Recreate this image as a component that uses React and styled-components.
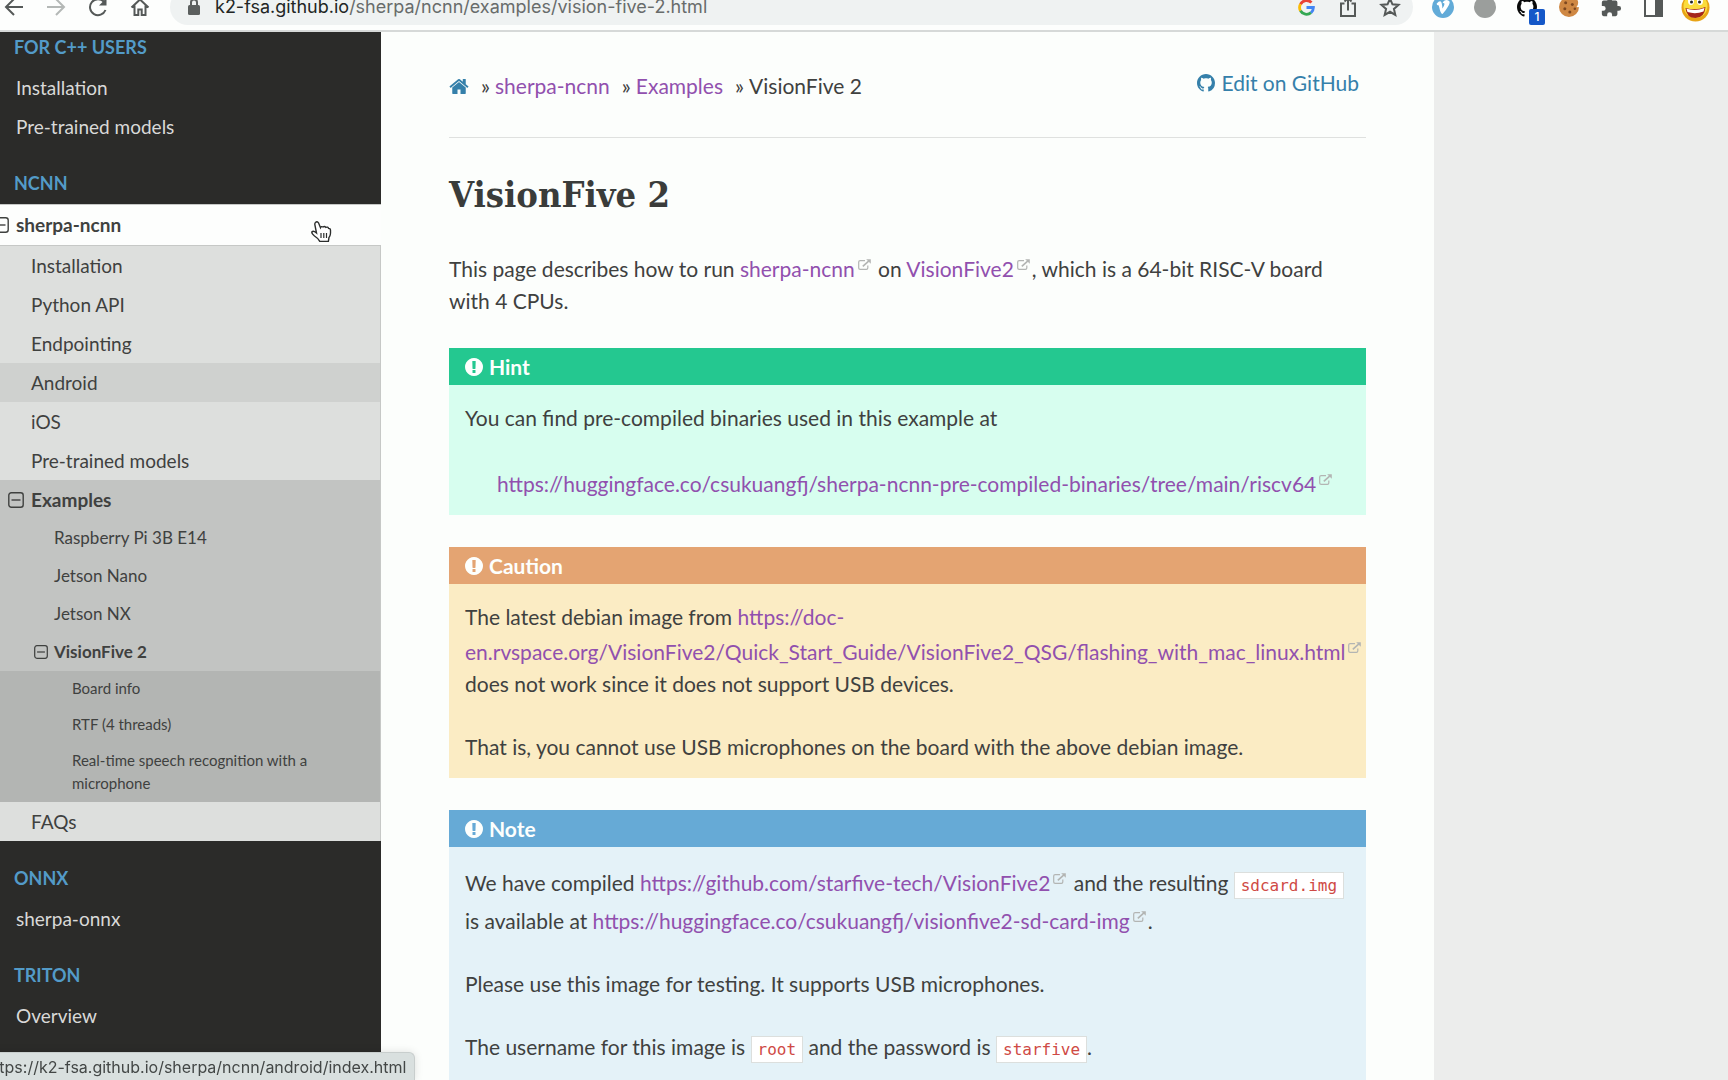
import React from "react";
import styled, { createGlobalStyle } from "styled-components";

const GlobalStyle = createGlobalStyle`
  *, *::before, *::after { box-sizing: border-box; }
  html, body { margin: 0; padding: 0; }
  body { background: #ecedec; color: #3f413f; font: 400 21px/32px Lato, "Open Sans", sans-serif; overflow: hidden; }
  ul, p, h1 { margin: 0; padding: 0; }
  ul { list-style: none; }
  a { text-decoration: none; color: inherit; }
  button { border: 0; padding: 0; background: none; color: inherit; font: inherit; cursor: pointer; }
  svg { display: block; flex: none; }
`;

/* ---------- browser chrome ---------- */

const Window = styled.div`
  display: flex;
  flex-direction: column;
  height: 100vh;
  overflow: hidden;
`;

const ToolbarClip = styled.header`
  flex: none;
  display: flex;
  align-items: flex-end;
  height: 32px;
  overflow: hidden;
  background: #fdfefd;
  border-bottom: 2px solid #d6d9d8;
`;

const Toolbar = styled.div`
  flex: 1;
  display: flex;
  align-items: center;
  gap: 9px;
  height: 46px;
  margin-left: -7px;
  padding-right: 12px;
  color: #5b5f5e;
`;

const ToolGroup = styled.div`
  display: flex;
  align-items: center;
`;

const ToolButton = styled.button`
  position: relative;
  display: flex;
  align-items: center;
  justify-content: center;
  width: 42px;
  height: 36px;
  color: ${(p) => p.$color || "#555958"};
`;

const AddressBar = styled.div`
  flex: 1;
  display: flex;
  align-items: center;
  height: 36px;
  padding: 0 2px 0 17px;
  border-radius: 18px;
  background: #eff2f2;
`;

const Url = styled.a`
  flex: 1;
  margin-left: 14px;
  font: 400 18px/24px Inter, Roboto, sans-serif;
  color: #686c6b;
  strong { font-weight: 400; color: #222524; }
`;

const Badge = styled.span`
  position: absolute;
  right: 3px;
  bottom: 0;
  width: 16px;
  height: 16px;
  border-radius: 2px;
  background: #1558c8;
  color: #fff;
  font: 500 12px/16px Inter, sans-serif;
  text-align: center;
`;

const StatusBubble = styled.div`
  position: fixed;
  left: -18px;
  bottom: 0;
  height: 28px;
  padding: 0 8px 0 2px;
  border: 1px solid #c8cecd;
  border-bottom: 0;
  border-top-right-radius: 6px;
  background: #d9e0df;
  color: #434746;
  font: 400 16px/28px Inter, Roboto, sans-serif;
  white-space: nowrap;
  box-shadow: 0 0 8px rgba(0, 0, 0, 0.12);
`;

const Pointer = styled.svg`
  position: fixed;
  left: 310px;
  top: 220px;
`;

/* ---------- page ---------- */

const Page = styled.div`
  flex: 1;
  display: flex;
  min-height: 0;
`;

const Sidebar = styled.nav`
  flex: none;
  width: 381px;
  overflow: hidden;
  background: #2b2b29;
`;

const MenuScroll = styled.div`
  margin-top: -22px;
`;

const Caption = styled.p`
  margin-top: 16px;
  padding-left: 14px;
  font-size: 18px;
  line-height: 42px;
  font-weight: 700;
  text-transform: uppercase;
  color: #539bc8;
`;

const levels = {
  1: { left: 16, size: 19, pad: "8px 16px 7px", line: 24 },
  2: { left: 31, size: 19, pad: "8px 16px 7px", line: 24 },
  3: { left: 54, size: 17, pad: "7px 16px", line: 24 },
  4: { left: 72, size: 15, pad: "6px 48px 7px", line: 23 },
};

const Row = styled.li`
  display: flex;
  align-items: center;
  padding: ${(p) => levels[p.$level].pad};
  padding-left: ${(p) => levels[p.$level].left}px;
  font-size: ${(p) => levels[p.$level].size}px;
  line-height: ${(p) => levels[p.$level].line}px;
  font-weight: ${(p) => (p.$current ? 700 : 400)};
  color: ${(p) => (p.$dark ? "#d9d9d8" : "#3f413f")};
  background: ${(p) => (p.$hover ? "#cfd1cf" : "transparent")};
`;

const SectionRow = styled(Row)`
  padding-bottom: 8px;
  border: 1px solid #c6c8c6;
  border-width: 1px 0;
  background: #fdfefd;
`;

const Toggle = styled.button`
  display: flex;
  align-items: center;
  justify-content: flex-end;
  width: 24px;
  height: 24px;
  margin-left: -24px;
  padding-right: ${(p) => (p.$small ? 6 : 7)}px;
`;

const Level2 = styled.ul`
  background: #dddfdd;
  border-right: 1px solid #c6c8c6;
`;

const Current = styled.div`
  background: #c2c4c2;
`;

const Level4 = styled.ul`
  background: #b3b5b3;
`;

const Content = styled.main`
  flex: 0 1 1053px;
  padding: 35px 68px;
  overflow: hidden;
  background: #fcfefc;
`;

const Crumbs = styled.div`
  display: flex;
  justify-content: space-between;
  margin-bottom: 32px;
  padding-bottom: 35px;
  border-bottom: 1px solid #dfe1df;
`;

const CrumbList = styled.ul`
  display: flex;
  padding-top: 3px;
`;

const Crumb = styled.li`
  display: flex;
  align-items: center;
  & + &::before { content: "»"; margin: 0 5px 0 12px; }
`;

const Link = styled.a`
  color: ${(p) => (p.$fresh ? "#3580aa" : "#9150ae")};
`;

const EditLink = styled(Link)`
  display: flex;
  align-items: center;
  gap: 6px;
  height: 32px;
  padding-right: 7px;
`;

const Title = styled.h1`
  margin-bottom: 32px;
  font: 700 36px/48px "Roboto Slab", "DejaVu Serif Condensed", "DejaVu Serif", serif;
  color: #3a3c3a;
`;

const Intro = styled.p`
  margin-bottom: 31px;
`;

const tones = {
  hint: ["#24c890", "#d7feef"],
  caution: ["#e4a472", "#fbecc4"],
  note: ["#66aad6", "#e4f2f8"],
};

const BoxTitle = styled.p`
  display: flex;
  align-items: center;
  gap: 6px;
  height: 37px;
  padding: 0 16px;
  font-weight: 700;
  color: #fdfffd;
  background: ${(p) => tones[p.$tone][0]};
`;

const BoxBody = styled.div`
  padding: 17px ${(p) => (p.$flush ? 0 : 16)}px 15px 16px;
  p + p { margin-top: 31px; }
`;

const Box = styled.section`
  margin-bottom: 32px;
  background: ${(p) => tones[p.$tone][1]};
  &:last-child { padding-bottom: 16px; }
`;

const Quote = styled.p`
  padding-left: 32px;
`;

const Code = styled.code`
  padding: 3px 6px;
  border: 1px solid #dcdfdd;
  background: #fff;
  color: #cf4a45;
  font-family: "DejaVu Sans Mono", monospace;
  font-size: 16px;
`;

const ExternalMark = styled.span`
  display: inline-flex;
  align-items: flex-end;
  width: 18px;
  height: 20px;
  padding-left: 3px;
  vertical-align: 7px;
  color: #b3b5b3;
`;

/* ---------- icons ---------- */

const Svg = ({ size = 20, h, box = "0 0 24 24", children, ...rest }) => (
  <svg width={size} height={h || size} viewBox={box} fill="none" stroke="currentColor" strokeWidth="2" aria-hidden="true" {...rest}>
    {children}
  </svg>
);

const Octocat = ({ size }) => (
  <Svg size={size} box="0 0 16 16" stroke="none">
    <path fill="currentColor" d="M8 0C3.58 0 0 3.58 0 8c0 3.54 2.29 6.53 5.47 7.59.4.07.55-.17.55-.38 0-.19-.01-.82-.01-1.49-2.01.37-2.53-.49-2.69-.94-.09-.23-.48-.94-.82-1.13-.28-.15-.68-.52-.01-.53.63-.01 1.08.58 1.23.82.72 1.21 1.87.87 2.33.66.07-.52.28-.87.51-1.07-1.78-.2-3.64-.89-3.64-3.95 0-.87.31-1.59.82-2.15-.08-.2-.36-1.02.08-2.12 0 0 .67-.21 2.2.82.64-.18 1.32-.27 2-.27.68 0 1.36.09 2 .27 1.53-1.04 2.2-.82 2.2-.82.44 1.1.16 1.92.08 2.12.51.56.82 1.27.82 2.15 0 3.07-1.87 3.75-3.65 3.95.29.25.54.73.54 1.48 0 1.07-.01 1.93-.01 2.2 0 .21.15.46.55.38A8.013 8.013 0 0016 8c0-4.42-3.58-8-8-8z" />
  </Svg>
);

const HomeIcon = () => (
  <Svg size={20} h={21} box="0 0 1664 1792" stroke="none">
    <path fill="currentColor" d="M1408 992v480q0 26-19 45t-45 19h-384v-384h-256v384h-384q-26 0-45-19t-19-45v-480q0-1 .5-3t.5-3l575-474 575 474q1 2 1 6zm223-69l-62 74q-8 9-21 11h-3q-13 0-21-7l-692-577-692 577q-12 8-24 7-13-2-21-11l-62-74q-8-10-7-23.5t11-21.5l719-599q32-26 76-26t76 26l244 204v-195q0-14 9-23t23-9h192q14 0 23 9t9 23v408l219 182q10 8 11 21.5t-7 23.5z" />
  </Svg>
);

const AlertIcon = () => (
  <Svg size={18} box="128 128 1536 1536" stroke="none">
    <path fill="currentColor" d="M896 128q209 0 385.5 103t279.5 279.5 103 385.5-103 385.5-279.5 279.5-385.5 103-385.5-103-279.5-279.5-103-385.5 103-385.5 279.5-279.5 385.5-103zm128 1247v-190q0-14-9-23.5t-22-9.5h-192q-13 0-23 10t-10 23v190q0 13 10 23t23 10h192q13 0 22-9.5t9-23.5zm-2-344l18-621q0-12-10-18-10-8-24-8h-220q-14 0-24 8-10 6-10 18l17 621q0 10 10 17.5t24 7.5h185q14 0 23.5-7.5t10.5-17.5z" />
  </Svg>
);

const MinusBox = ({ size }) => (
  <Svg size={size} box="0 0 16 16" strokeWidth="1.4">
    <rect x="0.8" y="0.8" width="14.4" height="14.4" rx="2.5" />
    <path d="M3.5 8h9" />
  </Svg>
);

const External = () => (
  <ExternalMark>
    <Svg size={13} h={11} box="0 0 13 11" strokeWidth="1.2">
      <path d="M7 1.6H2.2Q.7 1.6.7 3v5.9q0 1.4 1.5 1.4h6.2q1.4 0 1.4-1.4V6.6" />
      <path d="M4.8 7.4L11.2 1.6" strokeWidth="1.6" />
      <path d="M8.2.2h4.6v4.6z" fill="currentColor" stroke="none" />
    </Svg>
  </ExternalMark>
);

const Ext = ({ href, children }) => (
  <Link href={href}>{children}<External /></Link>
);

/* ---------- composition ---------- */

const BrowserBar = () => (
  <ToolbarClip>
    <Toolbar>
      <ToolGroup>
        <ToolButton aria-label="Back">
          <Svg size={20} box="0 0 20 20"><path d="M19 10H2M10 2l-8 8 8 8" /></Svg>
        </ToolButton>
        <ToolButton aria-label="Forward" $color="#b4b8b6">
          <Svg size={20} box="0 0 20 20"><path d="M1 10h17M10 2l8 8-8 8" /></Svg>
        </ToolButton>
        <ToolButton aria-label="Reload">
          <Svg size={20} box="0 0 20 20"><path d="M17.5 13A8 8 0 1 1 16 4.800" /><path d="M18.500 1v7.500H11z" fill="currentColor" stroke="none" /></Svg>
        </ToolButton>
        <ToolButton aria-label="Home">
          <Svg size={20} box="0 0 20 20"><path d="M1.500 10.500L10 2.500l8.500 8M4.500 8.500V18h3.800v-5.500h3.400V18h3.800V8.500" /></Svg>
        </ToolButton>
      </ToolGroup>
      <AddressBar>
        <Svg size={14} h={18} box="0 0 14 18">
          <rect x="1" y="7" width="12" height="10" rx="1.500" fill="currentColor" stroke="none" />
          <path d="M4 8V4.500a3 3 0 0 1 6 0V8" />
        </Svg>
        <Url href="https://k2-fsa.github.io/sherpa/ncnn/examples/vision-five-2.html">
          <strong>k2-fsa.github.io</strong>/sherpa/ncnn/examples/vision-five-2.html
        </Url>
        <ToolButton aria-label="Search with Google">
          <Svg size={17} box="0 0 18 18" strokeWidth="3">
            <path stroke="#e94235" d="M2.600 5.500A7.400 7.400 0 0 1 14.300 3.800" />
            <path stroke="#fabb05" d="M2.600 5.500a7.400 7.400 0 0 0 0 7" />
            <path stroke="#34a853" d="M2.600 12.500a7.400 7.400 0 0 0 11.200 2" />
            <path stroke="#4285f4" d="M13.800 14.500A7.400 7.400 0 0 0 16.300 9H9" />
          </Svg>
        </ToolButton>
        <ToolButton aria-label="Share">
          <Svg size={18} h={22} box="0 0 18 22"><path d="M5.500 7.500H2V20h14V7.500h-3.500M9 14.500V2.500M5.500 5.500L9 2l3.500 3.500" /></Svg>
        </ToolButton>
        <ToolButton aria-label="Bookmark">
          <Svg size={22} strokeWidth="2.200"><path d="M12 3l2.700 6.100 6.600.6-5 4.400 1.500 6.500L12 17.200l-5.800 3.400 1.500-6.500-5-4.400 6.600-.6z" /></Svg>
        </ToolButton>
      </AddressBar>
      <ToolGroup>
        <ToolButton aria-label="Video extension">
          <Svg size={22} stroke="none">
            <circle cx="12" cy="12" r="12" fill="#62abd8" />
            <path d="M5 8.500q3-3.500 4.500-2.500t1.800 7.500q3-4 2-5.500-.8-.8-1.800-.2Q13 4 17 4.500t1 6-6.500 9Q9.500 20 7.800 12q-.5-3-2-2z" fill="#fff" />
          </Svg>
        </ToolButton>
        <ToolButton aria-label="Extension">
          <Svg size={22} stroke="none"><circle cx="12" cy="12" r="12" fill="#9b9e9c" /></Svg>
        </ToolButton>
        <ToolButton aria-label="GitHub notifications" $color="#080909">
          <Octocat size={20} />
          <Badge>1</Badge>
        </ToolButton>
        <ToolButton aria-label="Cookies">
          <Svg size={20} stroke="none">
            <path d="M12 0a12 12 0 1 0 12 12q-3 1-4.500-1.500-3.500 0-3.500-4Q12 5 12 0z" fill="#cf8843" />
            <circle cx="16" cy="7" r="7" fill="#cf8843" />
            <circle cx="8" cy="7" r="1.800" fill="#7d4820" /><circle cx="16" cy="9" r="1.800" fill="#7d4820" />
            <circle cx="7" cy="14" r="1.800" fill="#7d4820" /><circle cx="13" cy="18" r="1.800" fill="#7d4820" />
            <circle cx="19" cy="14" r="1.500" fill="#7d4820" />
          </Svg>
        </ToolButton>
        <ToolButton aria-label="Extensions">
          <Svg size={22} stroke="none">
            <path fill="currentColor" d="M20.500 11H19V7a2 2 0 0 0-2-2h-4V3.500a2.500 2.500 0 0 0-5 0V5H4a2 2 0 0 0-2 2v3.800h1.500a2.700 2.700 0 0 1 0 5.400H2V20a2 2 0 0 0 2 2h3.800v-1.500a2.700 2.700 0 0 1 5.400 0V22H17a2 2 0 0 0 2-2v-4h1.500a2.500 2.500 0 0 0 0-5z" />
          </Svg>
        </ToolButton>
        <ToolButton aria-label="Side panel">
          <Svg size={19} box="0 0 19 19"><rect x="1" y="1" width="17" height="17" /><path d="M12 1h6v17h-6z" fill="currentColor" /></Svg>
        </ToolButton>
        <ToolButton aria-label="Profile">
          <Svg size={29} box="0 0 29 29" stroke="none">
            <circle cx="14.500" cy="14.500" r="14" fill="#e8a416" />
            <circle cx="14.500" cy="13" r="12" fill="#fbdc3c" />
            <ellipse cx="10" cy="8" rx="3" ry="4" fill="#fff" /><ellipse cx="19" cy="8" rx="3" ry="4" fill="#fff" />
            <circle cx="10.500" cy="9" r="1.500" fill="#222" /><circle cx="18.500" cy="9" r="1.500" fill="#222" />
            <path d="M4.500 15q10 3 20-1-1 11-10 11T4.500 15z" fill="#a5261c" />
            <path d="M5.500 15.800q9 2.500 18-.8l-1 3.500q-8 3-16 .5z" fill="#fff" />
          </Svg>
        </ToolButton>
      </ToolGroup>
    </Toolbar>
  </ToolbarClip>
);

const Item = ({ level, children, ...rest }) => (
  <Row $level={level} {...rest}><a href="#">{children}</a></Row>
);

const Menu = () => (
  <Sidebar aria-label="Documentation">
    <MenuScroll>
      <Caption>For C++ users</Caption>
      <ul>
        <Item level={1} $dark>Installation</Item>
        <Item level={1} $dark>Pre-trained models</Item>
      </ul>
      <Caption>ncnn</Caption>
      <ul>
        <SectionRow $level={1} $current>
          <Toggle aria-label="Collapse sherpa-ncnn"><MinusBox size={16} /></Toggle>
          <a href="#">sherpa-ncnn</a>
        </SectionRow>
        <li>
          <Level2>
            <Item level={2}>Installation</Item>
            <Item level={2}>Python API</Item>
            <Item level={2}>Endpointing</Item>
            <Item level={2} $hover>Android</Item>
            <Item level={2}>iOS</Item>
            <Item level={2}>Pre-trained models</Item>
            <li>
              <Current>
                <Row as="div" $level={2} $current>
                  <Toggle aria-label="Collapse Examples"><MinusBox size={16} /></Toggle>
                  <a href="#">Examples</a>
                </Row>
                <ul>
                  <Item level={3}>Raspberry Pi 3B E14</Item>
                  <Item level={3}>Jetson Nano</Item>
                  <Item level={3}>Jetson NX</Item>
                  <Row $level={3} $current>
                    <Toggle $small aria-label="Collapse VisionFive 2"><MinusBox size={14} /></Toggle>
                    <a href="#">VisionFive 2</a>
                  </Row>
                </ul>
                <Level4>
                  <Item level={4}>Board info</Item>
                  <Item level={4}>RTF (4 threads)</Item>
                  <Item level={4}>Real-time speech recognition with a microphone</Item>
                </Level4>
              </Current>
            </li>
            <Item level={2}>FAQs</Item>
          </Level2>
        </li>
      </ul>
      <Caption>onnx</Caption>
      <ul><Item level={1} $dark>sherpa-onnx</Item></ul>
      <Caption>Triton</Caption>
      <ul><Item level={1} $dark>Overview</Item></ul>
    </MenuScroll>
  </Sidebar>
);

const Admonition = ({ tone, title, flush, children }) => (
  <Box $tone={tone}>
    <BoxTitle $tone={tone}><AlertIcon />{title}</BoxTitle>
    <BoxBody $flush={flush}>{children}</BoxBody>
  </Box>
);

export default function App() {
  return (
    <Window>
      <GlobalStyle />
      <BrowserBar />
      <Page>
        <Menu />
        <Content>
          <Crumbs>
            <CrumbList>
              <Crumb><Link $fresh href="#" aria-label="Home"><HomeIcon /></Link></Crumb>
              <Crumb><Link href="#">sherpa-ncnn</Link></Crumb>
              <Crumb><Link href="#">Examples</Link></Crumb>
              <Crumb>VisionFive 2</Crumb>
            </CrumbList>
            <EditLink $fresh href="#"><Octocat size={18} />Edit on GitHub</EditLink>
          </Crumbs>
          <Title>VisionFive 2</Title>
          <Intro>
            This page describes how to run <Ext href="#">sherpa-ncnn</Ext> on <Ext href="#">VisionFive2</Ext>, which is a 64-bit RISC-V board with 4 CPUs.
          </Intro>
          <Admonition tone="hint" title="Hint">
            <p>You can find pre-compiled binaries used in this example at</p>
            <Quote><Ext href="#">https://huggingface.co/csukuangfj/sherpa-ncnn-pre-compiled-binaries/tree/main/riscv64</Ext></Quote>
          </Admonition>
          <Admonition tone="caution" title="Caution" flush>
            <p>
              The latest debian image from <Ext href="#">https://doc-en.rvspace.org/VisionFive2/Quick_Start_Guide/VisionFive2_QSG/flashing_with_mac_linux.html</Ext> does not work since it does not support USB devices.
            </p>
            <p>That is, you cannot use USB microphones on the board with the above debian image.</p>
          </Admonition>
          <Admonition tone="note" title="Note">
            <p>
              We have compiled <Ext href="#">https://github.com/starfive-tech/VisionFive2</Ext> and the resulting <Code>sdcard.img</Code> is available at <Ext href="#">https://huggingface.co/csukuangfj/visionfive2-sd-card-img</Ext>.
            </p>
            <p>Please use this image for testing. It supports USB microphones.</p>
            <p>The username for this image is <Code>root</Code> and the password is <Code>starfive</Code>.</p>
          </Admonition>
        </Content>
      </Page>
      <StatusBubble>https://k2-fsa.github.io/sherpa/ncnn/android/index.html</StatusBubble>
      <Pointer width="22" height="24" viewBox="0 0 22 24" aria-hidden="true">
        <path d="M5.500 2.500q1.600-1.600 3 .3l2 5q.8-1.800 2.500-.8 1.600-1.200 2.800.4 2-.9 2.800 1 1.700-.2 1.900 2 .3 5-1.500 7l-.6 4H9.800Q8.500 18.500 4.500 16q-3.200-2.500-2.600-4.200 1.600-1.500 4 .7L6.500 13 4.800 4.500q-.1-1.300.7-2z" fill="#fff" stroke="#2c2e2d" strokeWidth="1.400" />
        <path d="M11 13v5M13.800 13v5M16.500 13v5" stroke="#2c2e2d" strokeWidth="1.200" />
      </Pointer>
    </Window>
  );
}
